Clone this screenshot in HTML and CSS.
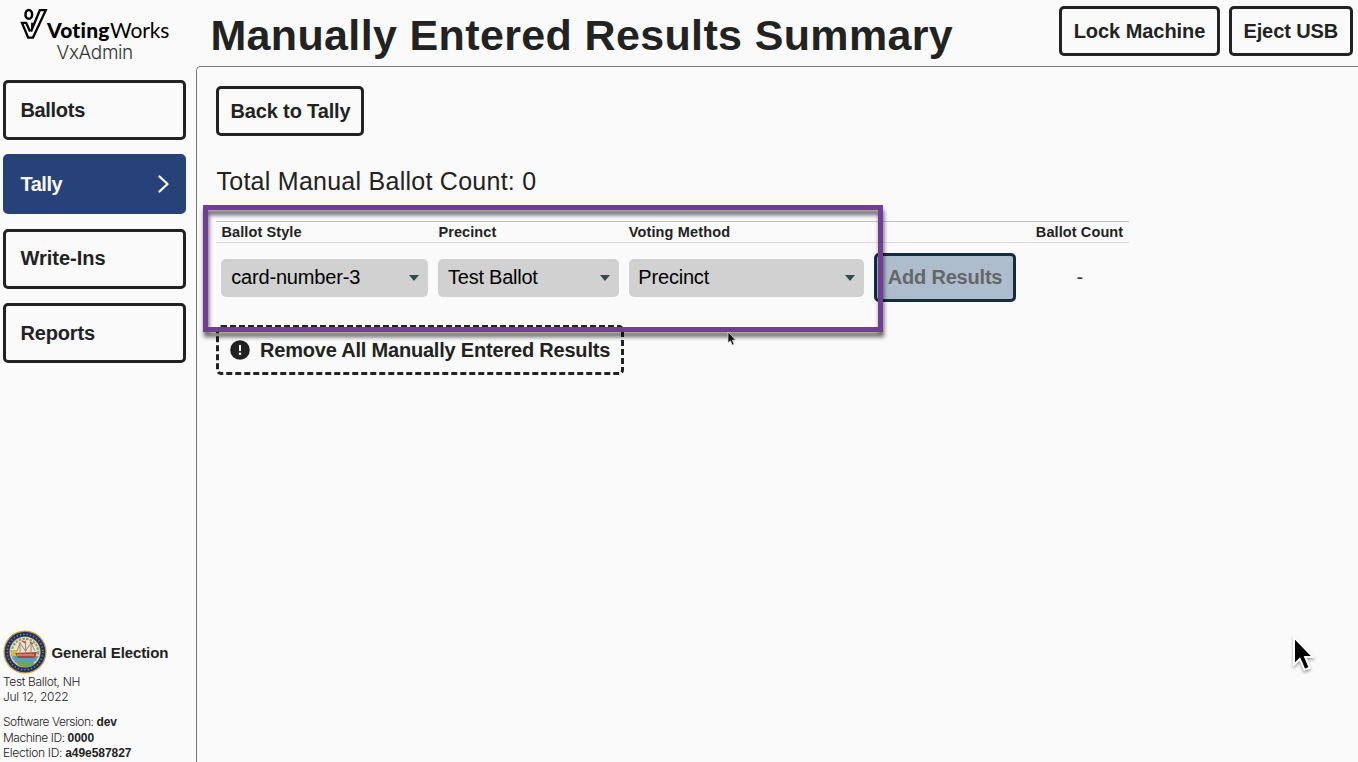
FILE: index.html
```html
<!DOCTYPE html>
<html lang="en">
<head>
<meta charset="utf-8">
<title>VxAdmin</title>
<link rel="stylesheet" href="styles.css">
</head>
<body>
<div class="app">
  <aside class="sidebar">
    <div class="brand">
      <div class="logo">
        <svg class="logo-mark" width="28" height="32" viewBox="0 0 28 32" fill="none" stroke="#000">
          <ellipse cx="8.8" cy="6.4" rx="3.3" ry="4.4" stroke-width="2.5"/>
          <path d="M11 23.5L19.8 2.2H25.8L13 29.6H8.2L2 14.9H6.2L10 23.5" stroke-width="2.3"/>
          <path d="M12 14.8V21" stroke-width="1.8"/>
        </svg>
        <span class="logo-voting">Voting</span><span class="logo-works">Works</span>
      </div>
      <div class="product">VxAdmin</div>
    </div>
    <nav class="nav">
      <a class="nav-item"><span class="t-ballots">Ballots</span></a>
      <a class="nav-item nav-active"><span class="t-tally">Tally</span>
        <svg width="12" height="18" viewBox="0 0 12 18" fill="none" stroke="#fff" stroke-width="2.3" stroke-linecap="round" stroke-linejoin="round"><path d="M1.5 1.5L9.5 9L1.5 16.5"/></svg>
      </a>
      <a class="nav-item"><span class="t-write">Write-Ins</span></a>
      <a class="nav-item"><span class="t-reports">Reports</span></a>
    </nav>
    <footer class="info">
      <div class="election">
        <svg class="seal" width="44" height="44" viewBox="0 0 44 44">
          <circle cx="22" cy="22" r="21.6" fill="#c9a23f"/>
          <circle cx="22" cy="22" r="20.3" fill="#21306b"/>
          <circle cx="22" cy="22" r="17.8" fill="none" stroke="#8f8258" stroke-width="1.6" stroke-dasharray="1.2 2.2"/>
          <circle cx="22" cy="22" r="15.6" fill="#d6b453"/>
          <circle cx="22" cy="22" r="14.8" fill="#e6e5cf"/>
          <circle cx="22" cy="22" r="13.2" fill="none" stroke="#7fa777" stroke-width="2.2" stroke-dasharray="2.5 1.2"/>
          <path d="M9 26H35A13.5 13.5 0 0 1 9 26Z" fill="#619dba"/>
          <path d="M8.5 20H14L15 26H9Z" fill="#e0b742"/>
          <path d="M12 31L23 31L32 34A14 14 0 0 1 14 34Z" fill="#6ea45d"/>
          <path d="M12 23L34 22L32 28H15Z" fill="#a94837"/>
          <path d="M14 25H31" stroke="#efd9b6" stroke-width=".8"/>
          <path d="M17 12V24M22.5 10.5V24M28 12V24M14 21L17 13L22.5 21L28 13L32 21" fill="none" stroke="#a87663" stroke-width=".9"/>
          <path d="M19 11L23 13M27 12L30 14" stroke="#cb5051" stroke-width="1.5"/>
        </svg>
        <span class="election-name">General Election</span>
      </div>
      <div class="meta">
        <div><span class="m-place">Test Ballot, NH</span></div>
        <div><span class="m-date">Jul 12, 2022</span></div>
      </div>
      <div class="versions">
        <div><span class="m-soft">Software Version: </span><b>dev</b></div>
        <div><span class="m-mach">Machine ID: </span><b>0000</b></div>
        <div><span class="m-elec">Election ID: </span><b class="m-hash">a49e587827</b></div>
      </div>
    </footer>
  </aside>
  <div class="page">
    <header class="header">
      <h1 class="title">Manually Entered Results Summary</h1>
      <div class="actions">
        <button class="btn btn-lock">Lock Machine</button>
        <button class="btn btn-eject">Eject USB</button>
      </div>
    </header>
    <main class="main">
      <button class="btn btn-back">Back to Tally</button>
      <h2 class="total"><span>Total Manual Ballot Count: 0</span></h2>
      <div class="table">
        <div class="row head">
          <div><span class="h-style">Ballot Style</span></div>
          <div><span class="h-prec">Precinct</span></div>
          <div><span class="h-vote">Voting Method</span></div>
          <div></div>
          <div><span class="h-count">Ballot Count</span></div>
        </div>
        <div class="row body">
          <div><div class="select"><span class="s-card">card-number-3</span><i class="caret"></i></div></div>
          <div><div class="select"><span class="s-test">Test Ballot</span><i class="caret"></i></div></div>
          <div><div class="select"><span class="s-prec">Precinct</span><i class="caret"></i></div></div>
          <div><button class="btn btn-add">Add Results</button></div>
          <div class="count">-</div>
        </div>
      </div>
      <button class="btn btn-remove">
        <svg class="alert" width="20" height="20" viewBox="0 0 20 20"><circle cx="10" cy="10" r="9.8" fill="#222"/><path d="M10 5.7V10.3" stroke="#fafafa" stroke-width="2" stroke-linecap="round"/><circle cx="10" cy="13.8" r="1.25" fill="#fafafa"/></svg>
        <span>Remove All Manually Entered Results</span>
      </button>
    </main>
  </div>
  <div class="highlight"></div>
  <svg class="cursor-small" width="12" height="16" viewBox="0 0 12 16"><path d="M1 1V11.8L3.4 9.8L5.2 14L7.1 13.2L5.4 9.2L8.6 9Z" fill="#111" stroke="#ddd" stroke-width=".7"/></svg>
  <svg class="cursor-big" width="32" height="44" viewBox="0 0 32 44"><path d="M5 3.2V30.6L10.8 25L15.5 35.8L20.7 33.6L16.1 23L24 22.8Z" fill="#000" stroke="#fff" stroke-width="2"/></svg>
</div>
</body>
</html>
```

FILE: styles.css
```css
* { box-sizing: border-box; }
body { margin: 0; background: #fafafa; color: #222; font-family: "Liberation Sans", Arial, sans-serif; }
.app { position: relative; display: flex; width: 1358px; height: 762px; overflow: hidden; }
span, b { white-space: pre; }

.sidebar { width: 196.4px; flex: none; display: flex; flex-direction: column; padding: 0 10px 0 3px; }
.brand { height: 80px; padding-top: 8px; }
.logo { display: flex; height: 34px; padding-left: 17px; color: #000; font-family: Lato, sans-serif; font-size: 21px; line-height: 43px; }
.logo-mark { flex: none; margin-right: -1px; }
.logo-voting { font-weight: 900; width: 63px; font-variant-ligatures: none; letter-spacing: 0.2px; }
.logo-works { font-weight: 400; letter-spacing: -0.15px; }
.product { font: 300 19px/22px Inter, sans-serif; letter-spacing: -0.4px; text-align: center; color: #333; }
.nav { display: flex; flex-direction: column; gap: 14.4px; }
.nav-item { height: 60px; border: 3px solid #222; border-radius: 5px; display: flex; align-items: center; justify-content: space-between; padding: 0 13px 1px 14.4px; font-size: 20px; line-height: 24px; font-weight: 700; }
.nav-active { background: #264278; border-color: #264278; color: #fafafa; padding-bottom: 0; }
.t-ballots { letter-spacing: -0.3px; }
.t-tally { letter-spacing: -0.45px; }
.t-reports { letter-spacing: -0.15px; }
.info { margin-top: auto; font-size: 12px; }
.election { display: flex; align-items: center; gap: 4.5px; height: 44px; }
.seal { flex: none; }
.election-name { font-size: 15px; font-weight: 700; letter-spacing: -0.1px; }
.meta { font-family: Inter, sans-serif; font-weight: 300; line-height: 15px; margin-top: 0; }
.m-place { letter-spacing: -0.35px; }
.m-date { letter-spacing: -0.25px; }
.versions { font-family: Inter, sans-serif; font-weight: 300; line-height: 15.6px; margin: 10px 0 1px; }
.versions div { height: 15.6px; }
.versions b { font-family: "Liberation Sans", sans-serif; font-weight: 700; line-height: 1; letter-spacing: -0.05px; }
.m-soft { letter-spacing: -0.47px; }
.m-mach { letter-spacing: -0.45px; }
.m-elec { letter-spacing: -0.3px; }

.page { flex: 1; display: flex; flex-direction: column; min-width: 0; }
.header { height: 66px; flex: none; display: flex; align-items: flex-start; justify-content: space-between; padding: 6px 5.5px 0 14px; }
.title { margin: 0; font-size: 43px; line-height: 58px; font-weight: 700; letter-spacing: 0.36px; white-space: nowrap; }
.actions { display: flex; gap: 9px; }
.btn { height: 50px; padding: 0; margin: 0; border: 3px solid #222; border-radius: 5px; background: #fafafa; color: #222; font: 700 20px/44px "Liberation Sans", Arial, sans-serif; white-space: nowrap; }
.btn-lock { width: 161px; letter-spacing: -0.05px; }
.btn-eject { width: 123.5px; letter-spacing: -0.1px; }
.main { flex: 1; border: solid #777; border-width: 1px 0 0 1px; border-top-left-radius: 5px; padding: 19px 0 0 19.1px; display: flex; flex-direction: column; align-items: flex-start; }
.btn-back { width: 148px; letter-spacing: -0.15px; }
.total { margin: 31px 0 26px; font-size: 25px; line-height: 28px; font-weight: 400; letter-spacing: 0.26px; }
.row { display: grid; grid-template-columns: 216.9px 190.3px 245.2px 162px 98px; }
.row > div { padding: 0 5px; }
.head { height: 22px; border-top: 1px solid #c2c2c6; border-bottom: 1px solid #ddd; font-size: 14.5px; font-weight: 700; line-height: 21px; letter-spacing: 0.1px; }
.h-vote { letter-spacing: 0.15px; }
.body { height: 69px; align-items: center; }
.select { height: 38px; border-radius: 5px; background: #d1d1d1; color: #000; display: flex; align-items: center; justify-content: space-between; padding: 0 9px 0 9.7px; font-size: 20px; }
.s-card { letter-spacing: -0.17px; }
.s-test { letter-spacing: -0.25px; }
.s-prec { letter-spacing: -0.2px; }
.caret { border: solid transparent; border-width: 6px 5.5px 0; border-top-color: #324c4a; }
.btn-add { width: 142.4px; height: 49px; line-height: 43px; display: block; background: #adbdce; border-color: #172a3e; color: #666; letter-spacing: -0.2px; }
.count { text-align: center; font-size: 20px; color: #333; }
.btn-remove { width: 408px; margin-top: 13px; border-style: dashed; display: flex; align-items: center; padding-left: 11px; gap: 9.5px; letter-spacing: -0.2px; }

.highlight { position: absolute; left: 203px; top: 204.5px; width: 680px; height: 127px; border: 5px solid #703e96; filter: drop-shadow(1px 5px 2px rgba(0,0,0,.6)); }
.cursor-small { position: absolute; left: 727px; top: 331px; }
.cursor-big { position: absolute; left: 1289px; top: 634px; filter: drop-shadow(0 2px 1.5px rgba(0,0,0,.35)); }
```
